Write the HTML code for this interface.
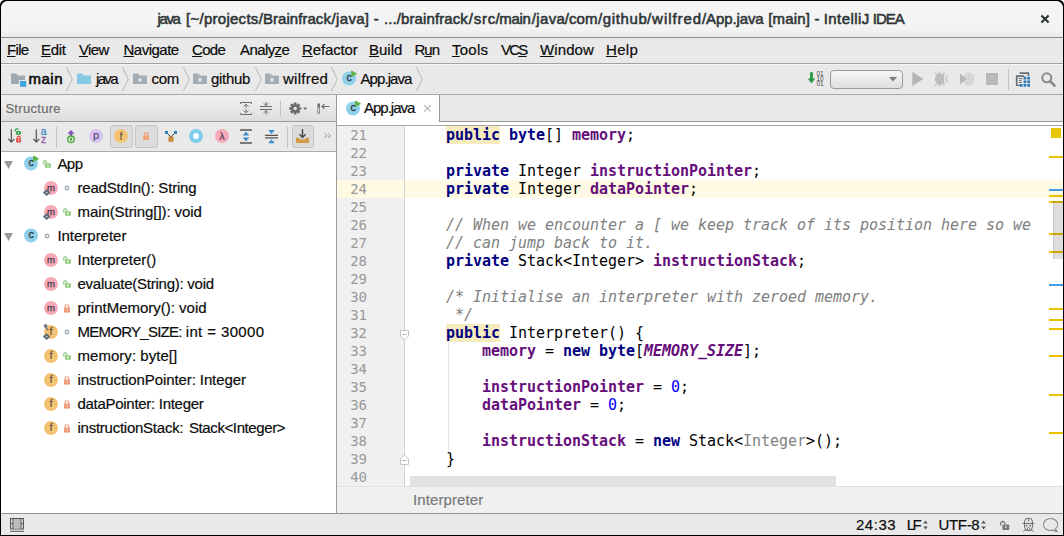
<!DOCTYPE html>
<html><head><meta charset="utf-8"><title>App.java - IntelliJ IDEA</title>
<style>
html,body{margin:0;padding:0;width:1064px;height:536px;overflow:hidden;background:#fff;}
body{font-family:"Liberation Sans","DejaVu Sans",sans-serif;font-size:15px;color:#1a1a1a;position:relative;}
.a{position:absolute;}
svg{position:absolute;overflow:visible;}
#win{position:absolute;left:0;top:0;width:1064px;height:536px;background:#000;border-radius:5px 5px 0 0;overflow:hidden;}
#clip{position:absolute;left:1px;top:1px;width:1062px;height:534px;border-radius:7px 7px 0 0;overflow:hidden;background:#e9e9e9;}
#in{position:absolute;left:-1px;top:-1px;width:1064px;height:536px;}
.t{position:absolute;white-space:nowrap;line-height:20px;font-size:15px;-webkit-text-stroke:0.2px currentColor;}
u{text-decoration:underline;text-decoration-thickness:1px;text-underline-offset:0.6px;}
#code{position:absolute;left:410px;top:126px;margin:0;font-family:"DejaVu Sans Mono","Liberation Mono",monospace;font-size:15px;line-height:18px;color:#000;white-space:pre;letter-spacing:-0.031px;}
#code b.k{color:#000080;}
#code b.f{color:#660e7a;}
#code i.c{color:#808080;font-style:italic;}
#code .n{color:#0000ff;}
#code .g{color:#808080;}
#code .h{background:#f6ebbc;}
#ln{position:absolute;left:337px;top:126px;width:30px;margin:0;font-family:"DejaVu Sans Mono","Liberation Mono",monospace;font-size:14px;line-height:18px;color:#999;white-space:pre;text-align:right;}
.ic text{font-family:"Liberation Sans",sans-serif;}
</style></head><body>
<div id="win"><div id="clip"><div id="in">

<div class="a" style="left:1px;top:1px;width:1062px;height:36px;background:linear-gradient(#f5f5f5,#f3f3f3 78%,#e9e9e9);"></div>
<span class="t" style="left:157.6px;top:9px;letter-spacing:-1.433px;color:#2e3436;-webkit-text-stroke:0.55px #2e3436;">java </span>
<span class="t" style="left:186.1px;top:9px;letter-spacing:0.26px;color:#2e3436;-webkit-text-stroke:0.55px #2e3436;">[~/projects</span>
<span class="t" style="left:258.8px;top:9px;letter-spacing:0.04px;color:#2e3436;-webkit-text-stroke:0.55px #2e3436;">/Brainfrack</span>
<span class="t" style="left:331.6px;top:9px;letter-spacing:0.314px;color:#2e3436;-webkit-text-stroke:0.55px #2e3436;">/java] - </span>
<span class="t" style="left:383.9px;top:9px;letter-spacing:0.108px;color:#2e3436;-webkit-text-stroke:0.55px #2e3436;">.../brainfrack</span>
<span class="t" style="left:468.7px;top:9px;letter-spacing:0.8px;color:#2e3436;-webkit-text-stroke:0.55px #2e3436;">/src</span>
<span class="t" style="left:495.5px;top:9px;letter-spacing:-0.35px;color:#2e3436;-webkit-text-stroke:0.55px #2e3436;">/main</span>
<span class="t" style="left:531.7px;top:9px;letter-spacing:0.375px;color:#2e3436;-webkit-text-stroke:0.55px #2e3436;">/java</span>
<span class="t" style="left:564.8px;top:9px;letter-spacing:0.067px;color:#2e3436;-webkit-text-stroke:0.55px #2e3436;">/com</span>
<span class="t" style="left:597.9px;top:9px;letter-spacing:0.633px;color:#2e3436;-webkit-text-stroke:0.55px #2e3436;">/github</span>
<span class="t" style="left:647px;top:9px;letter-spacing:0.957px;color:#2e3436;-webkit-text-stroke:0.55px #2e3436;">/wilfred</span>
<span class="t" style="left:702px;top:9px;letter-spacing:-0.112px;color:#2e3436;-webkit-text-stroke:0.55px #2e3436;">/App.java </span>
<span class="t" style="left:768.2px;top:9px;letter-spacing:0.2px;color:#2e3436;-webkit-text-stroke:0.55px #2e3436;">[main] - </span>
<span class="t" style="left:823.7px;top:9px;letter-spacing:0.443px;color:#2e3436;-webkit-text-stroke:0.55px #2e3436;">IntelliJ </span>
<span class="t" style="left:872.8px;top:9px;letter-spacing:-1.033px;color:#2e3436;-webkit-text-stroke:0.55px #2e3436;">IDEA</span>
<svg style="left:1040px;top:14px" width="10" height="10" viewBox="0 0 10 10"><path d="M1.4 1.4L8.6 8.6M8.6 1.4L1.4 8.6" stroke="#2e3436" stroke-width="2.1" fill="none"/></svg>
<div class="a" style="left:1px;top:37px;width:1062px;height:1px;background:#8f8f8a;"></div>
<div class="a" style="left:1px;top:38px;width:1062px;height:25px;background:#e9e9e9;"></div>
<span class="t" style="left:7px;top:40px;letter-spacing:-0.667px;color:#0c0c0c;"><u>F</u>ile</span>
<span class="t" style="left:41px;top:40px;letter-spacing:-0.333px;color:#0c0c0c;"><u>E</u>dit</span>
<span class="t" style="left:79px;top:40px;letter-spacing:-0.667px;color:#0c0c0c;"><u>V</u>iew</span>
<span class="t" style="left:123.5px;top:40px;letter-spacing:-0.5px;color:#0c0c0c;"><u>N</u>avigate</span>
<span class="t" style="left:192px;top:40px;letter-spacing:-0.667px;color:#0c0c0c;"><u>C</u>ode</span>
<span class="t" style="left:240px;top:40px;letter-spacing:-0.583px;color:#0c0c0c;">Analy<u>z</u>e</span>
<span class="t" style="left:302px;top:40px;letter-spacing:-0.143px;color:#0c0c0c;"><u>R</u>efactor</span>
<span class="t" style="left:369px;top:40px;letter-spacing:0px;color:#0c0c0c;"><u>B</u>uild</span>
<span class="t" style="left:414.5px;top:40px;letter-spacing:-1px;color:#0c0c0c;">R<u>u</u>n</span>
<span class="t" style="left:452px;top:40px;letter-spacing:0.25px;color:#0c0c0c;"><u>T</u>ools</span>
<span class="t" style="left:501px;top:40px;letter-spacing:-1.75px;color:#0c0c0c;">VC<u>S</u></span>
<span class="t" style="left:540px;top:40px;letter-spacing:0.1px;color:#0c0c0c;"><u>W</u>indow</span>
<span class="t" style="left:606px;top:40px;letter-spacing:0.333px;color:#0c0c0c;"><u>H</u>elp</span>
<div class="a" style="left:1px;top:63px;width:1062px;height:1px;background:#a2a2a2;"></div>
<div class="a" style="left:1px;top:64px;width:1062px;height:30px;background:#e9e9e9;"></div>
<div class="a" style="left:1px;top:64px;width:1062px;height:1px;background:#f6f6f6;"></div>
<div class="a" style="left:1px;top:94px;width:1062px;height:1px;background:#a8a8a8;"></div>
<svg style="left:11px;top:73px" width="16" height="14" viewBox="0 0 16 14"><path d="M0 0.4H5.2L6.7 2.6H14V11H0Z" fill="#9ea9b1"/><rect x="8" y="7" width="8.4" height="7" fill="#e9e9e9"/><rect x="9" y="8" width="6.2" height="5.8" fill="#3ba6dc"/></svg>
<svg style="left:76.5px;top:73px" width="16" height="14" viewBox="0 0 16 14"><path d="M0 0.4H5.2L6.7 2.6H14V11H0Z" fill="#85c9e4"/></svg>
<svg style="left:133px;top:73px" width="16" height="14" viewBox="0 0 16 14"><path d="M0 0.4H5.2L6.7 2.6H14V11H0Z" fill="#a3adb5"/><circle cx="7" cy="6.9" r="1.8" fill="#e9e9e9"/></svg>
<svg style="left:193px;top:73px" width="16" height="14" viewBox="0 0 16 14"><path d="M0 0.4H5.2L6.7 2.6H14V11H0Z" fill="#a3adb5"/><circle cx="7" cy="6.9" r="1.8" fill="#e9e9e9"/></svg>
<svg style="left:265px;top:73px" width="16" height="14" viewBox="0 0 16 14"><path d="M0 0.4H5.2L6.7 2.6H14V11H0Z" fill="#a3adb5"/><circle cx="7" cy="6.9" r="1.8" fill="#e9e9e9"/></svg>
<svg style="left:66px;top:67px" width="7" height="24.5" viewBox="0 0 7 27" preserveAspectRatio="none"><path d="M0.5 0.5L6.3 13.5L0.5 26.5" stroke="#b4b4b4" stroke-width="1" fill="none"/></svg>
<svg style="left:122px;top:67px" width="7" height="24.5" viewBox="0 0 7 27" preserveAspectRatio="none"><path d="M0.5 0.5L6.3 13.5L0.5 26.5" stroke="#b4b4b4" stroke-width="1" fill="none"/></svg>
<svg style="left:182.5px;top:67px" width="7" height="24.5" viewBox="0 0 7 27" preserveAspectRatio="none"><path d="M0.5 0.5L6.3 13.5L0.5 26.5" stroke="#b4b4b4" stroke-width="1" fill="none"/></svg>
<svg style="left:254.5px;top:67px" width="7" height="24.5" viewBox="0 0 7 27" preserveAspectRatio="none"><path d="M0.5 0.5L6.3 13.5L0.5 26.5" stroke="#b4b4b4" stroke-width="1" fill="none"/></svg>
<svg style="left:331px;top:67px" width="7" height="24.5" viewBox="0 0 7 27" preserveAspectRatio="none"><path d="M0.5 0.5L6.3 13.5L0.5 26.5" stroke="#b4b4b4" stroke-width="1" fill="none"/></svg>
<svg style="left:416px;top:67px" width="7" height="24.5" viewBox="0 0 7 27" preserveAspectRatio="none"><path d="M0.5 0.5L6.3 13.5L0.5 26.5" stroke="#b4b4b4" stroke-width="1" fill="none"/></svg>
<svg class="ic" style="left:342px;top:70px" width="16" height="16" viewBox="0 0 16 16"><circle cx="7" cy="8.5" r="7" fill="#8fd1ea"/><text x="7" y="11.4" font-size="10.5" text-anchor="middle" fill="#33434b" stroke="#33434b" stroke-width="0.45">c</text><path d="M9.2 0.2L15.2 3.7L9.2 7.2Z" fill="#5fb342" stroke="#8fd1ea" stroke-width="0"/></svg>
<span class="t" style="left:28.5px;top:69px;letter-spacing:0.5px;color:#0c0c0c;-webkit-text-stroke:0.6px #0c0c0c;">main</span>
<span class="t" style="left:96px;top:69px;letter-spacing:-1.667px;color:#0c0c0c;">java</span>
<span class="t" style="left:151.5px;top:69px;letter-spacing:-0.25px;color:#0c0c0c;">com</span>
<span class="t" style="left:211px;top:69px;letter-spacing:-0.3px;color:#0c0c0c;">github</span>
<span class="t" style="left:283px;top:69px;letter-spacing:0.25px;color:#0c0c0c;">wilfred</span>
<span class="t" style="left:360.5px;top:69px;letter-spacing:-0.929px;color:#0c0c0c;">App.java</span>
<svg style="left:806px;top:70px" width="20" height="18" viewBox="0 0 20 18" class="ic">
<path d="M4 2.2H7V8.4H9.4L5.5 13.2L1.6 8.4H4Z" fill="#2f9a48"/>
<g font-size="6.4" fill="#444" font-family="Liberation Sans"><text x="10.5" y="6.3">01</text><text x="10.5" y="11.3">10</text><text x="10.5" y="16.3">01</text></g></svg>
<div class="a" style="left:830px;top:70px;width:71px;height:17px;border:1px solid #9a9a9a;border-radius:4px;background:linear-gradient(#f6f6f6,#dedede);"></div>
<svg style="left:889px;top:77px" width="8" height="5" viewBox="0 0 8 5"><path d="M0 0H8L4 4.6Z" fill="#7b7b7b"/></svg>
<svg style="left:912px;top:72px" width="12" height="14" viewBox="0 0 12 14"><path d="M0.3 0L11.3 7L0.3 14Z" fill="#b4b4b4"/></svg>
<svg style="left:934px;top:71px" width="16" height="16" viewBox="0 0 16 16"><ellipse cx="5.6" cy="8" rx="4.7" ry="6" fill="#bdbdbd"/><path d="M10.6 3.4A5.4 5.4 0 0 0 10.6 12.6" stroke="#bdbdbd" stroke-width="1.6" fill="none"/><path d="M13.8 4.4A4.6 4.6 0 0 0 13.8 11.6" stroke="#bdbdbd" stroke-width="1.2" fill="none"/><g stroke="#c4c4c4" stroke-width="1.1"><path d="M2.2 3.2L0.6 1M5.6 2V0.2M9 3.2L10.4 1M2.2 12.8L0.6 15M5.6 14V15.8M9 12.8L10.4 15"/></g></svg>
<svg style="left:960px;top:72px" width="15" height="14" viewBox="0 0 15 14"><defs><pattern id="chk" width="3" height="3" patternUnits="userSpaceOnUse" patternTransform="rotate(45)"><rect width="1.5" height="1.5" fill="#c2c2c2"/><rect x="1.5" y="1.5" width="1.5" height="1.5" fill="#c2c2c2"/></pattern></defs><ellipse cx="9" cy="7" rx="5.6" ry="6.8" fill="url(#chk)"/><path d="M0 1.6L6.6 7L0 12.4Z" fill="#b9b9b9"/></svg>
<div class="a" style="left:986px;top:73px;width:12px;height:12px;background:#b8b8b8;"></div>
<div class="a" style="left:1008px;top:69px;width:1px;height:21px;background:#c3c3c3;"></div>
<svg style="left:1015px;top:71px" width="16" height="16" viewBox="0 0 16 16"><path d="M4.6 2.2H13.4V5" stroke="#6b6f73" stroke-width="1.7" fill="none"/><path d="M1.7 14.8V5.2H9.2" stroke="#6b6f73" stroke-width="1.7" fill="none"/><path d="M1 14.3H5" stroke="#6b6f73" stroke-width="1.2"/><path d="M4 7.6H7.4M4 9.6H6.6M4 11.5H6.6" stroke="#555" stroke-width="0.9"/><g fill="#2a7ab8"><rect x="8.6" y="5.8" width="2.7" height="2.7"/><rect x="12.3" y="5.8" width="2.7" height="2.7"/><rect x="8.6" y="9.4" width="2.7" height="2.7"/><rect x="12.3" y="9.4" width="2.7" height="2.7"/><rect x="4.9" y="13" width="2.7" height="2.7"/><rect x="8.6" y="13" width="2.7" height="2.7"/><rect x="12.3" y="13" width="2.7" height="2.7"/></g></svg>
<svg style="left:1041px;top:72px" width="15" height="15" viewBox="0 0 15 15"><circle cx="5.8" cy="5.8" r="4.5" stroke="#8a8a8a" stroke-width="2" fill="none"/><path d="M9 9L13.6 13.6" stroke="#8a8a8a" stroke-width="2.6" stroke-linecap="round"/></svg>
<div class="a" style="left:1px;top:95px;width:335px;height:26px;background:linear-gradient(#efefef,#e9e9e9 45%,#dddddd);"></div>
<div class="a" style="left:1px;top:121px;width:335px;height:1px;background:#9c9c9c;"></div>
<div class="a" style="left:1px;top:122px;width:335px;height:29px;background:#e9e9e9;"></div>
<div class="a" style="left:1px;top:151px;width:335px;height:1px;background:#acacac;"></div>
<div class="a" style="left:1px;top:152px;width:335px;height:361px;background:#fff;"></div>
<span class="t" style="left:5.4px;top:99px;letter-spacing:0.3px;color:#6e6e6e;font-size:13px;">Structure</span>
<svg style="left:240px;top:102px" width="12" height="13" viewBox="0 0 12 13"><g stroke="#6c6c6c" stroke-width="1" fill="none"><path d="M0.5 2V0.5H11.5V2M0.5 11V12.5H11.5V11"/><path d="M6 2.4V5.8M6 7.2V10.6"/><path d="M3.6 4.6L6 2.2L8.4 4.6M3.6 8.4L6 10.8L8.4 8.4"/></g></svg>
<svg style="left:260px;top:102px" width="12" height="13" viewBox="0 0 12 13"><g stroke="#6c6c6c" stroke-width="1" fill="none"><path d="M0 4.5H12M0 7.5H12M6 0V3.4M6 8.8V12.5"/><path d="M3.8 1.4L6 3.6L8.2 1.4M3.8 10.8L6 8.6L8.2 10.8"/></g></svg>
<div class="a" style="left:280px;top:101px;width:1px;height:15px;background:#c0c0c0;"></div>
<svg style="left:289px;top:102px" width="20" height="13" viewBox="0 0 20 13"><g transform="translate(6.2 6.5)"><g fill="#6a6a6a"><rect x="-1.3" y="-6" width="2.6" height="12"/><rect x="-1.3" y="-6" width="2.6" height="12" transform="rotate(45)"/><rect x="-1.3" y="-6" width="2.6" height="12" transform="rotate(90)"/><rect x="-1.3" y="-6" width="2.6" height="12" transform="rotate(135)"/><circle r="4.3"/></g><circle r="1.7" fill="#e6e6e6"/></g><path d="M14 5.4H18.4L16.2 8Z" fill="#6a6a6a"/></svg>
<svg style="left:317px;top:103px" width="13" height="11" viewBox="0 0 13 11"><rect x="0.5" y="0.5" width="2.4" height="10" fill="#6a6a6a"/><rect x="1.1" y="4.6" width="1.2" height="5" fill="#d8d8d8"/><path d="M5 3.5H12.5M7.4 1.1L5 3.5L7.4 5.9" stroke="#6a6a6a" stroke-width="1.1" fill="none"/></svg>
<div class="a" style="left:110px;top:125px;width:22.5px;height:22.5px;border:1px solid #c6c6c6;border-radius:3px;background:#dcdcdc;box-sizing:border-box"></div>
<div class="a" style="left:135px;top:125px;width:22.5px;height:22.5px;border:1px solid #c6c6c6;border-radius:3px;background:#dcdcdc;box-sizing:border-box"></div>
<div class="a" style="left:291.5px;top:125px;width:22.5px;height:22.5px;border:1px solid #c6c6c6;border-radius:3px;background:#dcdcdc;box-sizing:border-box"></div>
<svg style="left:7px;top:128px" width="16" height="16" viewBox="0 0 16 16"><path d="M4.3 1.2V14M1.3 10.8L4.3 14L7.3 10.8" stroke="#555" stroke-width="1.2" fill="none"/><path d="M8.3 3.6V2.2A1.6 1.6 0 0 1 11.3 1.6" stroke="#2f9e3f" stroke-width="1.2" fill="none"/><rect x="9.1" y="2.9" width="4.8" height="3.8" rx="1" fill="#2f9e3f"/><rect x="10.9" y="4" width="1.2" height="1.6" fill="#d8f0d8"/><path d="M10.3 10.4V9.6A1.4 1.4 0 0 1 13.1 9.6V10.4" stroke="#e0493d" stroke-width="1.2" fill="none"/><rect x="9.1" y="10.2" width="4.8" height="4.2" rx="1" fill="#e0493d"/><rect x="10.9" y="11.5" width="1.2" height="1.6" fill="#f8d8d4"/></svg>
<svg class="ic" style="left:32px;top:128px" width="16" height="16" viewBox="0 0 16 16"><path d="M4.3 1.2V14M1.3 10.8L4.3 14L7.3 10.8" stroke="#555" stroke-width="1.2" fill="none"/><text x="8.8" y="6.7" font-size="10.5" fill="#3a8fc4" stroke="#3a8fc4" stroke-width="0.3">a</text><text x="9" y="14.5" font-size="10.5" fill="#9b59b6" stroke="#9b59b6" stroke-width="0.3">z</text></svg>
<div class="a" style="left:56px;top:127px;width:1px;height:21px;background:#c3c3c3;"></div>
<svg style="left:65px;top:129px" width="12" height="15" viewBox="0 0 12 15"><path d="M6 1L9.6 4.8H7.2V7.5H4.8V4.8H2.4Z" fill="#8b4fb3"/><circle cx="6" cy="10.3" r="3.3" fill="#d9f0d3" stroke="#4fa83c" stroke-width="1.4"/><rect x="5.3" y="8.6" width="1.4" height="3.4" fill="#3b8a2c"/></svg>
<svg class="ic" style="left:89px;top:129px" width="14" height="14" viewBox="0 0 14 14"><circle cx="7" cy="7" r="7" fill="#d6c1f0"/><text x="7" y="9.8" font-size="11" text-anchor="middle" fill="#4a3f5c">p</text></svg>
<svg class="ic" style="left:114px;top:129px" width="14" height="14" viewBox="0 0 14 14"><circle cx="7" cy="7" r="7" fill="#f3c374"/><text x="7" y="10.8" font-size="11" text-anchor="middle" fill="#55493a">f</text></svg>
<svg style="left:143px;top:132px" width="6.2" height="8" viewBox="0 0 7 9"><path d="M1.5 4V2.6A2 2 0 0 1 5.5 2.6V4" stroke="#f09a68" stroke-width="1.2" fill="none"/><rect x="0.3" y="3.8" width="6.4" height="5" fill="#f09a68"/><rect x="3" y="5.4" width="1" height="1.8" fill="#fbe0cf"/></svg>
<svg style="left:165px;top:131px" width="12" height="11" viewBox="0 0 12 11"><path d="M1.5 1.5L6 6L10.5 1.5" stroke="#444" stroke-width="1" fill="none"/><rect x="0" y="0" width="3" height="3" fill="#2f7fb5"/><rect x="9" y="0" width="3" height="3" fill="#2f7fb5"/><rect x="3.4" y="5.6" width="5.2" height="5.2" fill="#c98a3a"/></svg>
<svg style="left:189px;top:129px" width="14" height="14" viewBox="0 0 14 14"><circle cx="7" cy="7" r="7" fill="#7fcdec"/><circle cx="7" cy="7" r="2.9" fill="#f4fbfe"/></svg>
<svg class="ic" style="left:214.5px;top:129px" width="14" height="14" viewBox="0 0 14 14"><circle cx="7" cy="7" r="7" fill="#f5a9b9"/><text x="7" y="10.8" font-size="11" text-anchor="middle" fill="#3a3336">λ</text></svg>
<svg style="left:240px;top:129px" width="12" height="15" viewBox="0 0 12 15"><path d="M0 1H12M0 14H12" stroke="#555" stroke-width="1.6"/><path d="M6 2.8L9.4 6.4H2.6Z" fill="#3a8fd0"/><path d="M6 12.2L9.4 8.6H2.6Z" fill="#3a8fd0"/></svg>
<svg style="left:264.5px;top:129px" width="13" height="15" viewBox="0 0 13 15"><path d="M0 6.4H13M0 8.8H13" stroke="#555" stroke-width="1.3"/><path d="M6.5 5L9.8 1H3.2Z" fill="#3a8fd0"/><path d="M6.5 10.2L9.8 14.2H3.2Z" fill="#3a8fd0"/></svg>
<div class="a" style="left:287px;top:127px;width:1px;height:21px;background:#c3c3c3;"></div>
<svg style="left:296px;top:129px" width="13" height="14" viewBox="0 0 13 14"><path d="M0 8.8H3L4.4 10.4H8.6L10 8.8H13V14H0Z" fill="#d49a45"/><path d="M6.5 0V8.2M3.4 5.2L6.5 8.4L9.6 5.2" stroke="#4d4d4d" stroke-width="1.5" fill="none"/></svg>
<svg style="left:324px;top:133px" width="7.4" height="5.4" viewBox="0 0 8 6"><path d="M0.5 0.5L3 3L0.5 5.5M4.5 0.5L7 3L4.5 5.5" stroke="#7a7a7a" stroke-width="1" fill="none"/></svg>
<svg style="left:4px;top:161px" width="9" height="8" viewBox="0 0 9 8"><path d="M0 0H9L4.5 8Z" fill="#9a9a9a"/></svg>
<svg style="left:4px;top:233px" width="9" height="8" viewBox="0 0 9 8"><path d="M0 0H9L4.5 8Z" fill="#9a9a9a"/></svg>
<svg class="ic" style="left:24px;top:155px" width="16" height="16" viewBox="0 0 16 16"><circle cx="7" cy="8.5" r="7" fill="#8fd1ea"/><text x="7" y="11.4" font-size="10.5" text-anchor="middle" fill="#33434b" stroke="#33434b" stroke-width="0.45">c</text><path d="M9.2 0.2L15.2 3.7L9.2 7.2Z" fill="#5fb342" stroke="#8fd1ea" stroke-width="0"/></svg>
<svg style="left:43px;top:160px" width="9" height="9" viewBox="0 0 9 9"><path d="M0.8 4.5V2A1.3 1.3 0 0 1 3.4 2V3.4" stroke="#93cc82" stroke-width="1.3" fill="none"/><rect x="1.9" y="3.2" width="6" height="4.5" rx="0.5" fill="#93cc82"/><rect x="4" y="4.7" width="1.9" height="1.5" fill="#e4f3df"/></svg>
<svg class="ic" style="left:43px;top:180px" width="15" height="16" viewBox="0 0 15 16"><circle cx="8" cy="8" r="7" fill="#f5a9b9"/><text x="8" y="10.8" font-size="9.5" text-anchor="middle" fill="#4a3a3e" stroke="#4a3a3e" stroke-width="0.25">m</text><path d="M3.6 9.2L7.4 12.6L3.6 16L-0.2 12.6Z" fill="#5f6c77"/><path d="M3.6 11.7L4.6 12.6L3.6 13.5L2.6 12.6Z" fill="#d9dde0"/></svg>
<svg style="left:64px;top:185px" width="6" height="6" viewBox="0 0 6 6"><circle cx="3" cy="3" r="1.9" fill="#e6eaee" stroke="#9aa5b0" stroke-width="1.1"/></svg>
<svg class="ic" style="left:43px;top:204px" width="15" height="16" viewBox="0 0 15 16"><circle cx="8" cy="8" r="7" fill="#f5a9b9"/><text x="8" y="10.8" font-size="9.5" text-anchor="middle" fill="#4a3a3e" stroke="#4a3a3e" stroke-width="0.25">m</text><path d="M3.6 9.2L7.4 12.6L3.6 16L-0.2 12.6Z" fill="#5f6c77"/><path d="M3.6 11.7L4.6 12.6L3.6 13.5L2.6 12.6Z" fill="#d9dde0"/></svg>
<svg style="left:63px;top:208px" width="9" height="9" viewBox="0 0 9 9"><path d="M0.8 4.5V2A1.3 1.3 0 0 1 3.4 2V3.4" stroke="#93cc82" stroke-width="1.3" fill="none"/><rect x="1.9" y="3.2" width="6" height="4.5" rx="0.5" fill="#93cc82"/><rect x="4" y="4.7" width="1.9" height="1.5" fill="#e4f3df"/></svg>
<svg class="ic" style="left:24px;top:227px" width="16" height="16" viewBox="0 0 16 16"><circle cx="7" cy="8.5" r="7" fill="#8fd1ea"/><text x="7" y="11.4" font-size="10.5" text-anchor="middle" fill="#33434b" stroke="#33434b" stroke-width="0.45">c</text></svg>
<svg style="left:44px;top:233px" width="6" height="6" viewBox="0 0 6 6"><circle cx="3" cy="3" r="1.9" fill="#e6eaee" stroke="#9aa5b0" stroke-width="1.1"/></svg>
<svg class="ic" style="left:43px;top:252px" width="15" height="16" viewBox="0 0 15 16"><circle cx="8" cy="8" r="7" fill="#f5a9b9"/><text x="8" y="10.8" font-size="9.5" text-anchor="middle" fill="#4a3a3e" stroke="#4a3a3e" stroke-width="0.25">m</text></svg>
<svg style="left:63px;top:256px" width="9" height="9" viewBox="0 0 9 9"><path d="M0.8 4.5V2A1.3 1.3 0 0 1 3.4 2V3.4" stroke="#93cc82" stroke-width="1.3" fill="none"/><rect x="1.9" y="3.2" width="6" height="4.5" rx="0.5" fill="#93cc82"/><rect x="4" y="4.7" width="1.9" height="1.5" fill="#e4f3df"/></svg>
<svg class="ic" style="left:43px;top:276px" width="15" height="16" viewBox="0 0 15 16"><circle cx="8" cy="8" r="7" fill="#f5a9b9"/><text x="8" y="10.8" font-size="9.5" text-anchor="middle" fill="#4a3a3e" stroke="#4a3a3e" stroke-width="0.25">m</text></svg>
<svg style="left:63px;top:280px" width="9" height="9" viewBox="0 0 9 9"><path d="M0.8 4.5V2A1.3 1.3 0 0 1 3.4 2V3.4" stroke="#93cc82" stroke-width="1.3" fill="none"/><rect x="1.9" y="3.2" width="6" height="4.5" rx="0.5" fill="#93cc82"/><rect x="4" y="4.7" width="1.9" height="1.5" fill="#e4f3df"/></svg>
<svg class="ic" style="left:43px;top:300px" width="15" height="16" viewBox="0 0 15 16"><circle cx="8" cy="8" r="7" fill="#f5a9b9"/><text x="8" y="10.8" font-size="9.5" text-anchor="middle" fill="#4a3a3e" stroke="#4a3a3e" stroke-width="0.25">m</text></svg>
<svg style="left:64px;top:303.5px" width="6" height="9" viewBox="0 0 6 9"><path d="M1.2 4V2.6A1.8 1.8 0 0 1 4.8 2.6V4" stroke="#f09a78" stroke-width="1.1" fill="none"/><rect x="0" y="3.6" width="6" height="5" fill="#f09a78"/><rect x="2.5" y="5.2" width="1" height="1.8" fill="#fde5da"/></svg>
<svg class="ic" style="left:43px;top:324px" width="15" height="16" viewBox="0 0 15 16"><circle cx="8" cy="8" r="7" fill="#f3c374"/><text x="8" y="11.4" font-size="11" text-anchor="middle" fill="#55493a" stroke="#55493a" stroke-width="0.1">f</text><path d="M3.6 9.2L7.4 12.6L3.6 16L-0.2 12.6Z" fill="#5f6c77"/><path d="M3.6 11.7L4.6 12.6L3.6 13.5L2.6 12.6Z" fill="#d9dde0"/><circle cx="2.6" cy="1.8" r="1.9" fill="#6e7a86"/><path d="M2.2 2.2L5.2 6.4" stroke="#6e7a86" stroke-width="1.5"/></svg>
<svg style="left:64px;top:329px" width="6" height="6" viewBox="0 0 6 6"><circle cx="3" cy="3" r="1.9" fill="#e6eaee" stroke="#9aa5b0" stroke-width="1.1"/></svg>
<svg class="ic" style="left:43px;top:348px" width="15" height="16" viewBox="0 0 15 16"><circle cx="8" cy="8" r="7" fill="#f3c374"/><text x="8" y="11.4" font-size="11" text-anchor="middle" fill="#55493a" stroke="#55493a" stroke-width="0.1">f</text></svg>
<svg style="left:63px;top:352px" width="9" height="9" viewBox="0 0 9 9"><path d="M0.8 4.5V2A1.3 1.3 0 0 1 3.4 2V3.4" stroke="#93cc82" stroke-width="1.3" fill="none"/><rect x="1.9" y="3.2" width="6" height="4.5" rx="0.5" fill="#93cc82"/><rect x="4" y="4.7" width="1.9" height="1.5" fill="#e4f3df"/></svg>
<svg class="ic" style="left:43px;top:372px" width="15" height="16" viewBox="0 0 15 16"><circle cx="8" cy="8" r="7" fill="#f3c374"/><text x="8" y="11.4" font-size="11" text-anchor="middle" fill="#55493a" stroke="#55493a" stroke-width="0.1">f</text></svg>
<svg style="left:64px;top:375.5px" width="6" height="9" viewBox="0 0 6 9"><path d="M1.2 4V2.6A1.8 1.8 0 0 1 4.8 2.6V4" stroke="#f09a78" stroke-width="1.1" fill="none"/><rect x="0" y="3.6" width="6" height="5" fill="#f09a78"/><rect x="2.5" y="5.2" width="1" height="1.8" fill="#fde5da"/></svg>
<svg class="ic" style="left:43px;top:396px" width="15" height="16" viewBox="0 0 15 16"><circle cx="8" cy="8" r="7" fill="#f3c374"/><text x="8" y="11.4" font-size="11" text-anchor="middle" fill="#55493a" stroke="#55493a" stroke-width="0.1">f</text></svg>
<svg style="left:64px;top:399.5px" width="6" height="9" viewBox="0 0 6 9"><path d="M1.2 4V2.6A1.8 1.8 0 0 1 4.8 2.6V4" stroke="#f09a78" stroke-width="1.1" fill="none"/><rect x="0" y="3.6" width="6" height="5" fill="#f09a78"/><rect x="2.5" y="5.2" width="1" height="1.8" fill="#fde5da"/></svg>
<svg class="ic" style="left:43px;top:420px" width="15" height="16" viewBox="0 0 15 16"><circle cx="8" cy="8" r="7" fill="#f3c374"/><text x="8" y="11.4" font-size="11" text-anchor="middle" fill="#55493a" stroke="#55493a" stroke-width="0.1">f</text></svg>
<svg style="left:64px;top:423.5px" width="6" height="9" viewBox="0 0 6 9"><path d="M1.2 4V2.6A1.8 1.8 0 0 1 4.8 2.6V4" stroke="#f09a78" stroke-width="1.1" fill="none"/><rect x="0" y="3.6" width="6" height="5" fill="#f09a78"/><rect x="2.5" y="5.2" width="1" height="1.8" fill="#fde5da"/></svg>
<span class="t" style="left:57.4px;top:154px;letter-spacing:-0.55px;color:#0c0c0c;">App</span>
<span class="t" style="left:77.5px;top:178px;letter-spacing:-0.194px;color:#0c0c0c;">readStdIn(): String</span>
<span class="t" style="left:77.5px;top:202px;letter-spacing:-0.079px;color:#0c0c0c;">main(String[]): void</span>
<span class="t" style="left:57.4px;top:226px;letter-spacing:-0.02px;color:#0c0c0c;">Interpreter</span>
<span class="t" style="left:77.5px;top:250px;letter-spacing:-0.042px;color:#0c0c0c;">Interpreter()</span>
<span class="t" style="left:77.5px;top:274px;letter-spacing:-0.243px;color:#0c0c0c;">evaluate(String): void</span>
<span class="t" style="left:77.5px;top:298px;letter-spacing:-0.006px;color:#0c0c0c;">printMemory(): void</span>
<span class="t" style="left:77.5px;top:322px;letter-spacing:-0.736px;color:#0c0c0c;">MEMORY_SIZE: </span>
<span class="t" style="left:185.7px;top:322px;letter-spacing:0.38px;color:#0c0c0c;">int = 30000</span>
<span class="t" style="left:77.5px;top:346px;letter-spacing:0.038px;color:#0c0c0c;">memory: byte[]</span>
<span class="t" style="left:77.5px;top:370px;letter-spacing:-0.096px;color:#0c0c0c;">instructionPointer: Integer</span>
<span class="t" style="left:77.5px;top:394px;letter-spacing:-0.289px;color:#0c0c0c;">dataPointer: Integer</span>
<span class="t" style="left:77.5px;top:418px;letter-spacing:-0.25px;color:#0c0c0c;">instructionStack: </span>
<span class="t" style="left:189px;top:418px;letter-spacing:-0.4px;color:#0c0c0c;">Stack&lt;Integer&gt;</span>
<div class="a" style="left:336px;top:95px;width:1px;height:418px;background:#999;"></div>
<div class="a" style="left:337px;top:95px;width:726px;height:26px;background:#e8e8e8;"></div>
<div class="a" style="left:439px;top:121px;width:624px;height:1px;background:#999;"></div>
<div class="a" style="left:337px;top:95px;width:102px;height:30px;background:#fff;"></div>
<div class="a" style="left:439px;top:95px;width:1px;height:27px;background:#999;"></div>
<div class="a" style="left:337px;top:122px;width:726px;height:3px;background:#fff;"></div>
<div class="a" style="left:337px;top:125px;width:726px;height:1px;background:#a6a6a6;"></div>
<svg class="ic" style="left:346px;top:99.5px" width="16" height="16" viewBox="0 0 16 16"><circle cx="7" cy="8.5" r="7" fill="#8fd1ea"/><text x="7" y="11.4" font-size="10.5" text-anchor="middle" fill="#33434b" stroke="#33434b" stroke-width="0.45">c</text><path d="M9.2 0.2L15.2 3.7L9.2 7.2Z" fill="#5fb342" stroke="#8fd1ea" stroke-width="0"/></svg>
<span class="t" style="left:364px;top:98px;letter-spacing:-1px;color:#0c0c0c;">App.java</span>
<svg style="left:424px;top:105px" width="7" height="7" viewBox="0 0 7 7"><path d="M0.3 0.3L6.7 6.7M6.7 0.3L0.3 6.7" stroke="#b2b2b2" stroke-width="1.1" fill="none"/></svg>
<div class="a" style="left:337px;top:126px;width:726px;height:360px;background:#fff;"></div>
<div class="a" style="left:337px;top:126px;width:67px;height:360px;background:#f0f0f0;"></div>
<div class="a" style="left:337px;top:180px;width:726px;height:18px;background:#fffae3;"></div>
<div class="a" style="left:404px;top:126px;width:1px;height:360px;background:#d2d2d2;"></div>
<div class="a" style="left:448px;top:342px;width:1px;height:108px;background:#e4e4e4;"></div>
<pre id="ln">21
22
23
24
25
26
27
28
29
30
31
32
33
34
35
36
37
38
39
40</pre>
<pre id="code">    <b class="k h">public</b> <b class="k">byte</b>[] <b class="f">memory</b>;

    <b class="k">private</b> Integer <b class="f">instructionPointer</b>;
    <b class="k">private</b> Integer <b class="f">dataPointer</b>;

    <i class="c">// When we encounter a [ we keep track of its position here so we</i>
    <i class="c">// can jump back to it.</i>
    <b class="k">private</b> Stack&lt;Integer&gt; <b class="f">instructionStack</b>;

    <i class="c">/* Initialise an interpreter with zeroed memory.</i>
    <i class="c"> */</i>
    <b class="k h">public</b> Interpreter() {
        <b class="f">memory</b> = <b class="k">new</b> <b class="k">byte</b>[<b class="f"><i>MEMORY_SIZE</i></b>];

        <b class="f">instructionPointer</b> = <span class="n">0</span>;
        <b class="f">dataPointer</b> = <span class="n">0</span>;

        <b class="f">instructionStack</b> = <b class="k">new</b> Stack&lt;<span class="g">Integer</span>&gt;();
    }
</pre>
<svg style="left:400px;top:330px" width="9" height="11" viewBox="0 0 9 11"><path d="M0.5 0.5H8.5V6L4.5 10.2L0.5 6Z" fill="#fff" stroke="#c4c4c4"/><path d="M2.4 4.5H6.6" stroke="#b4b4b4"/></svg>
<svg style="left:400px;top:454px" width="9" height="11" viewBox="0 0 9 11"><path d="M0.5 10.5H8.5V5L4.5 0.8L0.5 5Z" fill="#fff" stroke="#c4c4c4"/><path d="M2.4 6.5H6.6" stroke="#b4b4b4"/></svg>
<div class="a" style="left:410px;top:476px;width:426px;height:10px;background:#e1e1e1;"></div>
<div class="a" style="left:1051px;top:128px;width:10px;height:10px;background:#e9c400;"></div>
<div class="a" style="left:1049px;top:156px;width:14px;height:2px;background:#ebc200;"></div>
<div class="a" style="left:1049px;top:195px;width:14px;height:2px;background:#ebc200;"></div>
<div class="a" style="left:1049px;top:201px;width:14px;height:2px;background:#ebc200;"></div>
<div class="a" style="left:1049px;top:233px;width:14px;height:2px;background:#ebc200;"></div>
<div class="a" style="left:1049px;top:251px;width:14px;height:2px;background:#ebc200;"></div>
<div class="a" style="left:1049px;top:308px;width:14px;height:2px;background:#ebc200;"></div>
<div class="a" style="left:1049px;top:319px;width:14px;height:2px;background:#ebc200;"></div>
<div class="a" style="left:1049px;top:328px;width:14px;height:2px;background:#ebc200;"></div>
<div class="a" style="left:1049px;top:355px;width:14px;height:2px;background:#ebc200;"></div>
<div class="a" style="left:1049px;top:394px;width:14px;height:2px;background:#ebc200;"></div>
<div class="a" style="left:1049px;top:432px;width:14px;height:2px;background:#ebc200;"></div>
<div class="a" style="left:1049px;top:189px;width:14px;height:2px;background:#3f9fe0;"></div>
<div class="a" style="left:1049px;top:284px;width:14px;height:2px;background:#3f9fe0;"></div>
<div class="a" style="left:1053px;top:201px;width:10px;height:58px;background:rgba(0,0,0,0.13);box-shadow:inset 1px 0 0 rgba(0,0,0,0.08)"></div>
<div class="a" style="left:337px;top:486px;width:726px;height:27px;background:#f0f0f0;"></div>
<div class="a" style="left:337px;top:486px;width:726px;height:1px;background:#e2e2e2;"></div>
<span class="t" style="left:413px;top:490px;letter-spacing:0.1px;color:#787878;">Interpreter</span>
<div class="a" style="left:1px;top:513px;width:1062px;height:1px;background:#919191;"></div>
<div class="a" style="left:1px;top:514px;width:1062px;height:21px;background:#e9e9e9;"></div>
<svg style="left:10px;top:518px" width="15" height="14" viewBox="0 0 15 14"><rect x="0.5" y="0.5" width="13" height="10.5" fill="#dedede" stroke="#555"/><rect x="3.5" y="1" width="7" height="9.5" fill="#bdbdbd"/><path d="M3 0.5V11M11 0.5V11M0.5 5.7H3M11 5.7H13.5" stroke="#555" stroke-width="1"/><rect x="0.2" y="12.8" width="13.8" height="1" fill="#555"/></svg>
<span class="t" style="left:856px;top:515px;letter-spacing:0.525px;color:#0c0c0c;">24:33</span>
<span class="t" style="left:906.7px;top:515px;letter-spacing:-2.6px;color:#0c0c0c;">LF</span>
<span class="t" style="left:938.5px;top:515px;letter-spacing:-0.325px;color:#0c0c0c;">UTF-8</span>
<svg style="left:923px;top:520px" width="5" height="10" viewBox="0 0 5 10"><path d="M2.5 0.6L4.8 3.6H0.2ZM2.5 9.4L4.8 6.4H0.2Z" fill="#555"/></svg>
<svg style="left:981px;top:520px" width="5" height="10" viewBox="0 0 5 10"><path d="M2.5 0.6L4.8 3.6H0.2ZM2.5 9.4L4.8 6.4H0.2Z" fill="#555"/></svg>
<svg style="left:999px;top:520px" width="11" height="10" viewBox="0 0 11 10"><path d="M1.6 5.4V3.6A2.1 2.1 0 0 1 5.8 3.6V4.2" stroke="#777" stroke-width="1.3" fill="none"/><rect x="3.4" y="4.4" width="6.8" height="5.5" rx="1" fill="#777"/><rect x="6.2" y="5.8" width="1.2" height="2.4" fill="#e9e9e9"/></svg>
<svg style="left:1022px;top:518px" width="13" height="14" viewBox="0 0 13 14"><g stroke="#666" stroke-width="1" fill="none"><path d="M2.6 5.2V3.2A3.9 3 0 0 1 10.4 3.2V5.2"/><path d="M0.6 5.4H12.4"/><path d="M2.6 5.6V9A3.9 3.6 0 0 0 10.4 9V5.6"/><path d="M1.4 13.6C2.4 11.8 4 11.8 6.5 12.4C9 11.8 10.6 11.8 11.6 13.6"/></g><circle cx="4.8" cy="7.6" r="0.9" fill="#666"/><circle cx="8.2" cy="7.6" r="0.9" fill="#666"/><path d="M6.5 1.2V3.4" stroke="#666"/><path d="M5 10.4Q6.5 9.2 8 10.4" stroke="#666" fill="none"/></svg>
<svg style="left:1043px;top:518px" width="16" height="14" viewBox="0 0 16 14"><path d="M7.6 0.5C11.6 0.5 14.7 3.2 14.7 6.5C14.7 8.3 13.8 9.9 12.4 11C12.7 12 13.6 12.9 14.8 13.4C13 13.5 11.4 13 10.4 12C9.5 12.35 8.6 12.5 7.6 12.5C3.6 12.5 0.5 9.8 0.5 6.5C0.5 3.2 3.6 0.5 7.6 0.5Z" fill="none" stroke="#8a8a8a" stroke-width="1.1"/></svg>
</div></div></div>
</body></html>
